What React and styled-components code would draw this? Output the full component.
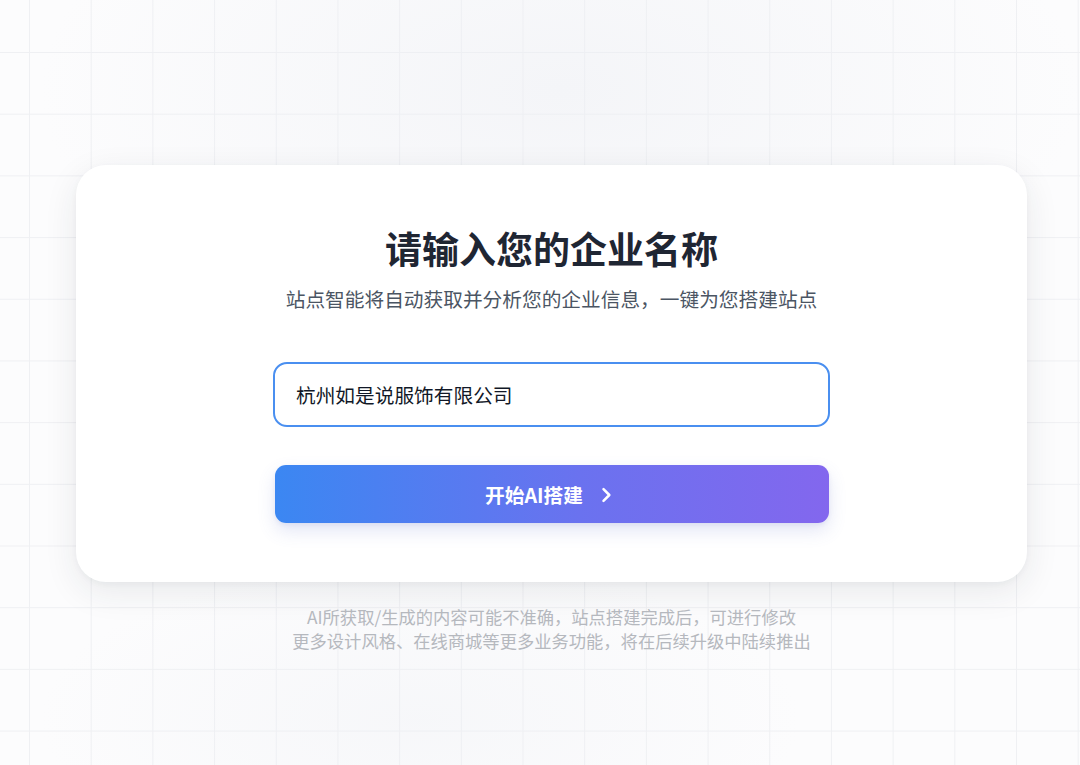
import React, { useState } from 'react';
import styled, { createGlobalStyle } from 'styled-components';

const GlobalStyle = createGlobalStyle`
  html, body {
    margin: 0;
    padding: 0;
  }
  body {
    font-family: "Inter", "Noto Sans CJK SC", sans-serif;
    background: #fcfcfd;
  }
  * {
    box-sizing: border-box;
  }
`;

const Page = styled.div`
  width: 1080px;
  height: 765px;
  overflow: hidden;
  display: flex;
  flex-direction: column;
  align-items: center;
  padding: 165px 0 0 23px;
  background-color: #fcfcfd;
  background-image:
    radial-gradient(ellipse 520px 260px at 560px 90px, rgba(236, 238, 243, 0.5), rgba(236, 238, 243, 0) 100%),
    radial-gradient(ellipse 380px 160px at 420px 720px, rgba(236, 238, 243, 0.35), rgba(236, 238, 243, 0) 100%),
    linear-gradient(to right, #eff0f3 1px, transparent 1px),
    linear-gradient(to bottom, #eff0f3 1px, transparent 1px);
  background-size: 100% 100%, 100% 100%, 61.7px 61.7px, 61.7px 61.7px;
  background-position: 0 0, 0 0, 29px 0, 0 52px;
`;

const Card = styled.div`
  width: 951px;
  background: #ffffff;
  border-radius: 30px;
  box-shadow: 0 10px 34px rgba(30, 40, 60, 0.09), 0 2px 6px rgba(30, 40, 60, 0.04);
  padding: 59px 0 59px;
  display: flex;
  flex-direction: column;
  align-items: center;
`;

const Title = styled.h1`
  margin: 0;
  font-family: "Noto Sans CJK SC", sans-serif;
  font-size: 37px;
  line-height: 48px;
  font-weight: 700;
  color: #1f2633;
`;

const Subtitle = styled.p`
  margin: 13px 0 0;
  font-family: "Noto Sans CJK SC", sans-serif;
  font-size: 19.7px;
  line-height: 28px;
  color: #4b5563;
`;

const Field = styled.input`
  margin-top: 49px;
  width: 557px;
  height: 65px;
  border: 2.5px solid #4a8ff0;
  border-radius: 14px;
  padding: 0 21px;
  font-family: "Noto Sans CJK SC", sans-serif;
  font-size: 19.7px;
  color: #111827;
  background: #fff;
  outline: none;
`;

const StartButton = styled.button`
  margin-top: 38px;
  width: 554px;
  height: 58px;
  border: none;
  border-radius: 11px;
  background: linear-gradient(90deg, #3b87f2 0%, #6a72ef 55%, #8367ee 100%);
  box-shadow: 0 8px 18px rgba(80, 100, 200, 0.16), 0 2px 4px rgba(60, 80, 160, 0.08);
  color: #ffffff;
  font-family: "Noto Sans CJK SC", sans-serif;
  font-size: 19.7px;
  font-weight: 700;
  display: flex;
  align-items: center;
  justify-content: center;
  gap: 13px;
  cursor: pointer;
  padding: 0 2px 0 0;
`;

const Chevron = styled.svg`
  width: 20px;
  height: 20px;
  margin-top: 1px;
`;

const Notes = styled.div`
  margin-top: 23px;
  text-align: center;
  font-family: "Noto Sans CJK SC", sans-serif;
  font-size: 17.3px;
  line-height: 24px;
  color: #b5b8be;
`;

const NoteLine = styled.div``;

export default function App() {
  const [name, setName] = useState('杭州如是说服饰有限公司');
  return (
    <>
      <GlobalStyle />
      <Page>
        <Card>
          <Title>请输入您的企业名称</Title>
          <Subtitle>站点智能将自动获取并分析您的企业信息，一键为您搭建站点</Subtitle>
          <Field value={name} onChange={e => setName(e.target.value)} />
          <StartButton>
            开始AI搭建
            <Chevron viewBox="0 0 24 24" fill="none" stroke="currentColor" strokeWidth="3" strokeLinecap="round" strokeLinejoin="round">
              <path d="M9 5l7 7-7 7" />
            </Chevron>
          </StartButton>
        </Card>
        <Notes>
          <NoteLine>AI所获取/生成的内容可能不准确，站点搭建完成后，可进行修改</NoteLine>
          <NoteLine>更多设计风格、在线商城等更多业务功能，将在后续升级中陆续推出</NoteLine>
        </Notes>
      </Page>
    </>
  );
}
